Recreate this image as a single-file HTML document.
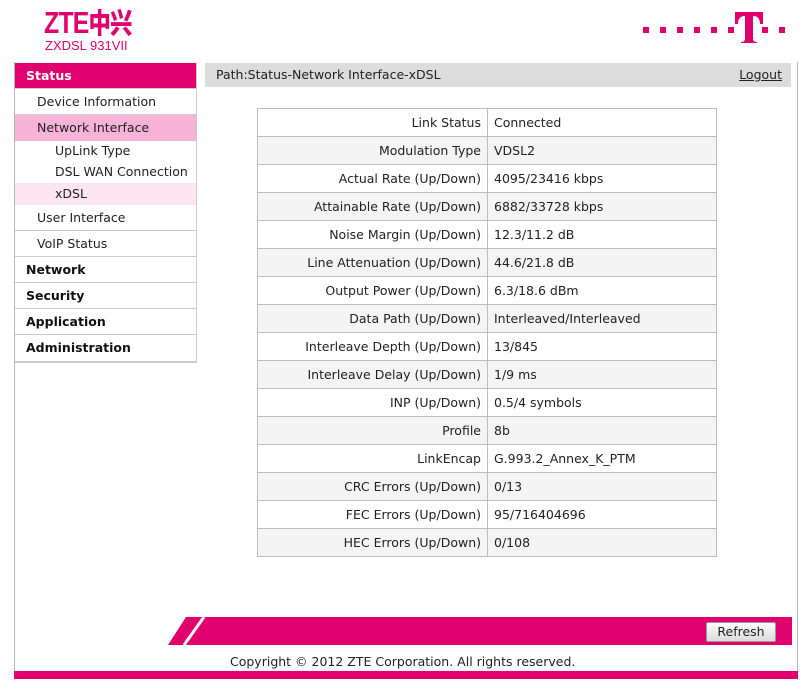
<!DOCTYPE html>
<html><head><meta charset="utf-8"><style>
*{margin:0;padding:0;box-sizing:border-box}
body{width:809px;height:695px;background:#fff;font-family:Tahoma,"DejaVu Sans","Liberation Sans",sans-serif;font-size:12.5px;color:#222;position:relative;overflow:hidden}
.a{position:absolute}
.logo{left:44px;top:7px;color:#e0006e;font:bold 31px/30px "Liberation Sans",sans-serif;letter-spacing:-1px;transform:scaleX(.8);transform-origin:left;white-space:nowrap}
.logo2{left:45px;top:38px;color:#e0006e;font:13px "Liberation Sans",sans-serif}
.frame{left:14px;top:62px;width:784px;height:610px;border-left:1px solid #b8b8b8;border-right:1px solid #b8b8b8}
.side{left:15px;top:63px;width:182px;border-right:1px solid #ccc;border-bottom:2px solid #ccc}
.side div{border-bottom:1px solid #ccc;height:26px;line-height:25px;padding-left:22px}
.side .h{font-weight:bold;color:#111;padding-left:11px}
.side .s{border:none;height:21px;line-height:20px;padding-left:40px}
.path{left:205px;top:63px;width:586px;height:24px;background:#dcdcdc;line-height:23px;padding-left:11px}
table{position:absolute;left:257px;top:108px;width:460px;border-collapse:collapse}
td{border:1px solid #bdbdbd;height:28px;padding:0 6px}
td:first-child{text-align:right;width:230px}
tr:nth-child(even) td{background:#f4f4f4}
.btn{left:706px;top:622px;width:70px;height:20px;border:1px solid #999;border-radius:2px;background:linear-gradient(#fafafa,#dcdcdc);text-align:center;line-height:18px;color:#222}
</style></head><body>
<div class="a logo">ZTE<span style="font-family:'Noto Sans CJK SC',sans-serif;font-weight:900;font-size:28px">中兴</span></div>
<div class="a logo2">ZXDSL 931VII</div>
<svg class="a" style="left:640px;top:10px" width="150" height="36">
<g fill="#e0006e"><rect x="3" y="17" width="6" height="6"/><rect x="20" y="17" width="6" height="6"/><rect x="37" y="17" width="6" height="6"/><rect x="54" y="17" width="6" height="6"/><rect x="71" y="17" width="6" height="6"/><rect x="88" y="17" width="6" height="6"/><rect x="122" y="17" width="6" height="6"/><rect x="139" y="17" width="6" height="6"/>
<path d="M95 2h28v12h-3c0-5-2-8-7-8v22c0 3 1 4 4 4v1h-16v-1c3 0 4-1 4-4V6c-5 0-7 3-7 8h-3z"/></g></svg>
<div class="a frame"></div>
<div class="a side">
<div class="h" style="background:#e0006e;color:#fff;height:26px">Status</div>
<div>Device Information</div>
<div style="background:#f6b3d5;border:none">Network Interface</div>
<div class="s">UpLink Type</div>
<div class="s">DSL WAN Connection</div>
<div class="s" style="background:#fde4f1;height:22px;line-height:22px">xDSL</div>
<div>User Interface</div>
<div>VoIP Status</div>
<div class="h">Network</div>
<div class="h">Security</div>
<div class="h">Application</div>
<div class="h" style="border:none">Administration</div>
</div>
<div class="a path">Path:Status-Network Interface-xDSL<span style="position:absolute;right:9px;text-decoration:underline">Logout</span></div>
<table>
<tr><td>Link Status</td><td>Connected</td></tr>
<tr><td>Modulation Type</td><td>VDSL2</td></tr>
<tr><td>Actual Rate (Up/Down)</td><td>4095/23416 kbps</td></tr>
<tr><td>Attainable Rate (Up/Down)</td><td>6882/33728 kbps</td></tr>
<tr><td>Noise Margin (Up/Down)</td><td>12.3/11.2 dB</td></tr>
<tr><td>Line Attenuation (Up/Down)</td><td>44.6/21.8 dB</td></tr>
<tr><td>Output Power (Up/Down)</td><td>6.3/18.6 dBm</td></tr>
<tr><td>Data Path (Up/Down)</td><td>Interleaved/Interleaved</td></tr>
<tr><td>Interleave Depth (Up/Down)</td><td>13/845</td></tr>
<tr><td>Interleave Delay (Up/Down)</td><td>1/9 ms</td></tr>
<tr><td>INP (Up/Down)</td><td>0.5/4 symbols</td></tr>
<tr><td>Profile</td><td>8b</td></tr>
<tr><td>LinkEncap</td><td>G.993.2_Annex_K_PTM</td></tr>
<tr><td>CRC Errors (Up/Down)</td><td>0/13</td></tr>
<tr><td>FEC Errors (Up/Down)</td><td>95/716404696</td></tr>
<tr><td>HEC Errors (Up/Down)</td><td>0/108</td></tr>
</table>
<svg class="a" style="left:168px;top:617px" width="624" height="28"><path d="M18 0H624V28H0z" fill="#e0006e"/><path d="M36 0L16 28" stroke="#fff" stroke-width="3"/></svg>
<div class="a btn">Refresh</div>
<div class="a" style="left:230px;top:654px">Copyright © 2012 ZTE Corporation. All rights reserved.</div>
<div class="a" style="left:14px;top:671px;width:784px;height:8px;background:#e0006e"></div>
</body></html>
